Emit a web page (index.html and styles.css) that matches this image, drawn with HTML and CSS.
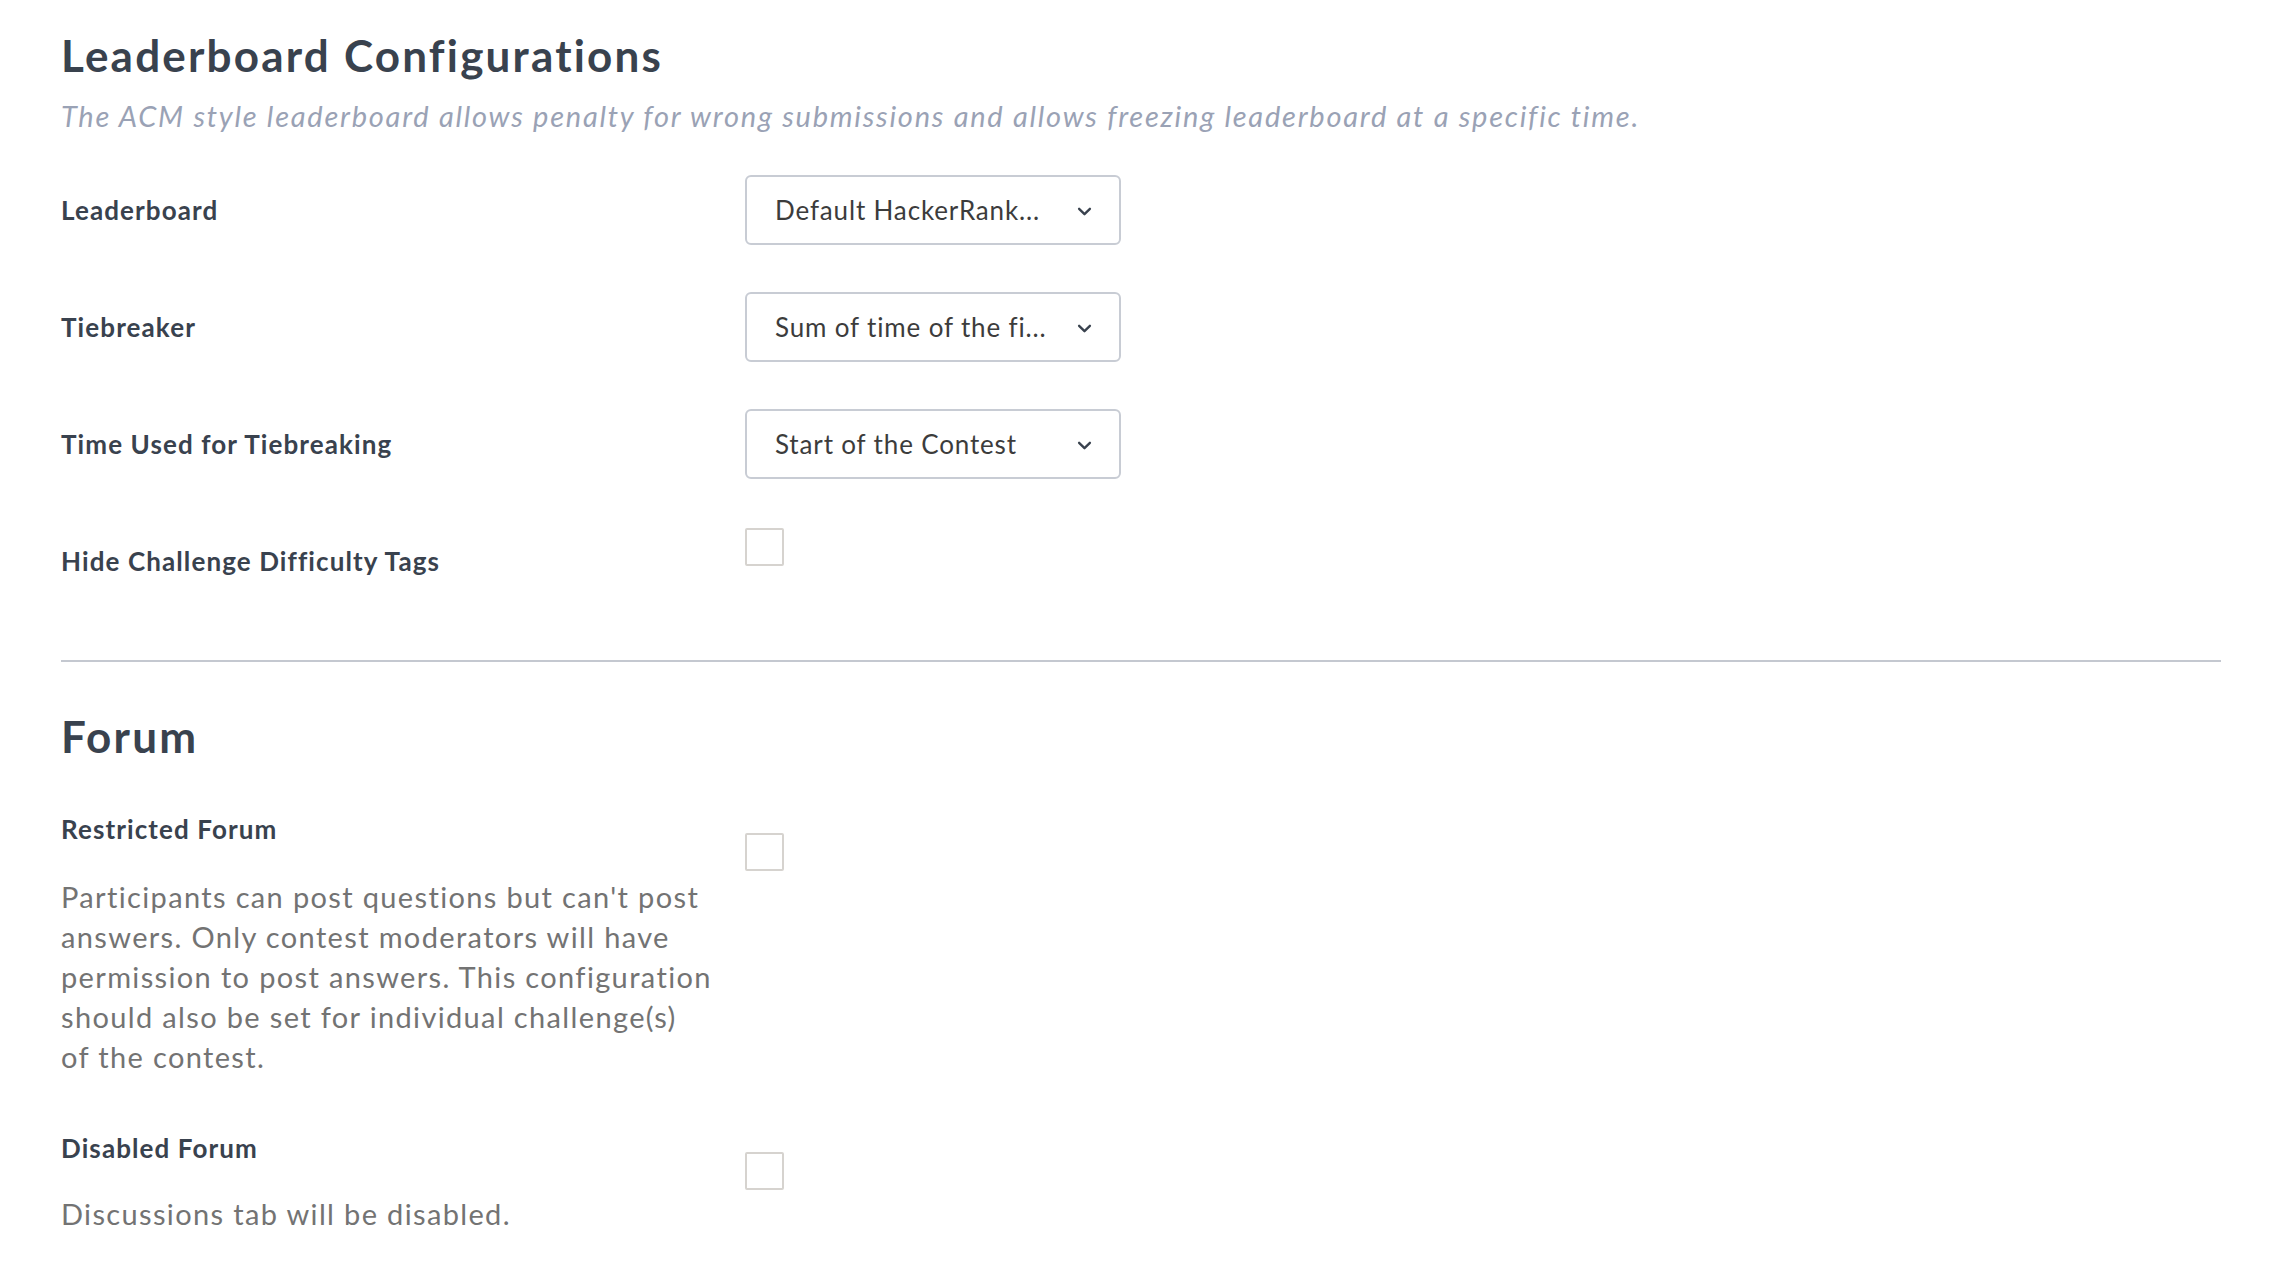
FILE: index.html
```html
<!DOCTYPE html>
<html lang="en">
<head>
<meta charset="utf-8">
<title>Contest Settings</title>
<link rel="stylesheet" href="styles.css">
</head>
<body>
<main class="page">
  <section class="section">
    <h1 class="section-title">Leaderboard Configurations</h1>
    <p class="section-desc">The ACM style leaderboard allows penalty for wrong submissions and allows freezing leaderboard at a specific time.</p>
    <div class="rows">
      <div class="row">
        <span class="row-label">Leaderboard</span>
        <div class="select">
          <span class="select-value">Default HackerRank...</span>
          <svg class="chevron" viewBox="0 0 16 10" width="15" height="9"><path d="M2 2l6 6 6-6" fill="none" stroke="#39424e" stroke-width="2.6" stroke-linecap="round" stroke-linejoin="round"/></svg>
        </div>
      </div>
      <div class="row">
        <span class="row-label">Tiebreaker</span>
        <div class="select">
          <span class="select-value">Sum of time of the fi...</span>
          <svg class="chevron" viewBox="0 0 16 10" width="15" height="9"><path d="M2 2l6 6 6-6" fill="none" stroke="#39424e" stroke-width="2.6" stroke-linecap="round" stroke-linejoin="round"/></svg>
        </div>
      </div>
      <div class="row">
        <span class="row-label">Time Used for Tiebreaking</span>
        <div class="select">
          <span class="select-value">Start of the Contest</span>
          <svg class="chevron" viewBox="0 0 16 10" width="15" height="9"><path d="M2 2l6 6 6-6" fill="none" stroke="#39424e" stroke-width="2.6" stroke-linecap="round" stroke-linejoin="round"/></svg>
        </div>
      </div>
      <div class="row">
        <span class="row-label">Hide Challenge Difficulty Tags</span>
        <span class="checkbox checkbox--top"></span>
      </div>
    </div>
  </section>

  <hr class="divider">

  <section class="section">
    <h2 class="section-title section-title--forum">Forum</h2>
    <div class="option">
      <div class="option-text">
        <span class="row-label">Restricted Forum</span>
        <p class="option-desc">Participants can post questions but can't post answers. Only contest moderators will have permission to post answers. This configuration should also be set for individual challenge(s) of&nbsp;the contest.</p>
      </div>
      <span class="checkbox checkbox--offset"></span>
    </div>
    <div class="option option--next">
      <div class="option-text">
        <span class="row-label">Disabled Forum</span>
        <p class="option-desc option-desc--short">Discussions tab will be disabled.</p>
      </div>
      <span class="checkbox checkbox--offset"></span>
    </div>
  </section>
</main>
</body>
</html>
```
FILE: styles.css
```css
html, body {
  margin: 0;
  padding: 0;
  background: #ffffff;
}

body {
  font-family: Lato, "Liberation Sans", sans-serif;
  color: #39424e;
}

.page {
  padding: 27px 63px 0 61px;
}

.section-title {
  margin: 0;
  font-size: 44px;
  line-height: 56px;
  font-weight: 700;
  letter-spacing: 2.2px;
  color: #39424e;
}

.section-title--forum {
  margin-top: 46px;
}

.section-desc {
  margin: 15px 0 0;
  font-size: 29px;
  line-height: 36px;
  font-style: italic;
  letter-spacing: 1.75px;
  color: #9aa2b5;
}

.rows {
  margin-top: 41px;
  display: flex;
  flex-direction: column;
  gap: 47px;
}

.row {
  display: grid;
  grid-template-columns: 684px 376px;
  align-items: center;
  min-height: 70px;
}

.row-label {
  display: block;
  font-size: 26px;
  line-height: 32px;
  font-weight: 700;
  letter-spacing: 1.1px;
  color: #39424e;
}

.select {
  box-sizing: border-box;
  height: 70px;
  border: 2px solid #c8ccd4;
  border-radius: 6px;
  display: flex;
  align-items: center;
  justify-content: space-between;
  padding: 0 27px 0 28px;
  background: #fff;
}

.select-value {
  font-size: 26px;
  letter-spacing: 0.85px;
  color: #3c3c3c;
  white-space: nowrap;
}

.chevron {
  display: block;
  margin-top: 2px;
}

.checkbox {
  box-sizing: border-box;
  display: block;
  width: 39px;
  height: 38px;
  border: 2px solid #d6d3cf;
  border-radius: 2px;
  background: #fff;
}

.checkbox--top {
  align-self: start;
  margin-top: 2px;
}

.checkbox--offset {
  margin-top: 20px;
}

.divider {
  border: 0;
  height: 2px;
  background: #c4c8d0;
  margin: 64px 0 0;
}

.option {
  display: grid;
  grid-template-columns: 684px 40px;
  align-items: start;
  margin-top: 49px;
}

.option--next {
  margin-top: 55px;
}

.option-desc {
  margin: 32px 0 0;
  max-width: 662px;
  font-size: 29px;
  line-height: 40px;
  letter-spacing: 1.35px;
  color: #737373;
}

.option-desc--short {
  margin-top: 30px;
}
```
